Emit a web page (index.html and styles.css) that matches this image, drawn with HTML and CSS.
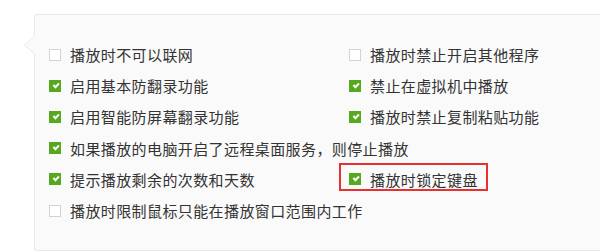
FILE: index.html
```html
<!DOCTYPE html>
<html lang="zh-CN">
    <head>
        <meta charset="utf-8">
        <title>播放设置</title>
        <meta name="viewport" content="width=device-width, initial-scale=1">
        <link rel="stylesheet" href="styles.css">
    </head>
    <body>
		<section class="panel">
			<!-- Playback restrictions -->
			<ul class="opts">
				<li class="opt"><span class="box"></span>播放时不可以联网</li>
				<li class="opt"><span class="box"></span>播放时禁止开启其他程序</li>
				<li class="opt"><span class="box on"></span>启用基本防翻录功能</li>
				<li class="opt"><span class="box on"></span>禁止在虚拟机中播放</li>
				<li class="opt"><span class="box on"></span>启用智能防屏幕翻录功能</li>
				<li class="opt"><span class="box on"></span>播放时禁止复制粘贴功能</li>
				<li class="opt wide"><span class="box on"></span>如果播放的电脑开启了远程桌面服务，则停止播放</li>
				<li class="opt"><span class="box on"></span>提示播放剩余的次数和天数</li>
				<li class="opt mark"><span class="box on"></span>播放时锁定键盘</li>
				<li class="opt wide"><span class="box"></span>播放时限制鼠标只能在播放窗口范围内工作</li>
			</ul>
		</section>
    </body>
</html>
```

FILE: styles.css
```css
/* Reset */
*,
*::after,
*::before {
	margin: 0;
	padding: 0;
	box-sizing: border-box;
}

body {
	font-family: "Noto Sans CJK SC", "Noto Sans", sans-serif;
	font-size: 15px;
	color: #333;
	background: #fff;
	width: 600px;
	height: 251px;
	overflow: hidden;
}

/* Panel with left pointer */
.panel {
	position: relative;
	margin: 14px 0 0 34px;
	width: 566px;
	height: 237px;
	background: #fafafa;
	border: 1px solid #e9e9e9;
	border-right: none;
	border-radius: 3px 0 0 3px;
	padding: 24px 0 0 14px;
}
.panel::before {
	content: "";
	position: absolute;
	left: -11px;
	top: 20px;
	border-top: 10px solid transparent;
	border-bottom: 10px solid transparent;
	border-right: 11px solid #e9e9e9;
}
.panel::after {
	content: "";
	position: absolute;
	left: -10px;
	top: 20px;
	border-top: 10px solid transparent;
	border-bottom: 10px solid transparent;
	border-right: 11px solid #fafafa;
}

.opts {
	list-style: none;
	display: grid;
	grid-template-columns: 300px 250px;
	grid-auto-rows: 31.2px;
}

.opt {
	position: relative;
	display: flex;
	align-items: center;
	line-height: 1;
	letter-spacing: 0.4px;
	white-space: nowrap;
}
.wide {
	grid-column: 1 / 3;
}

/* Checkbox */
.box {
	width: 12px;
	height: 12px;
	margin-right: 9px;
	border: 1px solid #d3d3d3;
	background: #fff;
	flex-shrink: 0;
}
.box.on {
	position: relative;
	border-color: #56a91f;
	background: #56a91f;
}
.box.on::after {
	content: "";
	position: absolute;
	left: 2.5px;
	top: 2px;
	width: 6px;
	height: 3.5px;
	border-left: 2px solid #fff;
	border-bottom: 2px solid #fff;
	transform: rotate(-45deg);
}

/* Highlight frame */
.mark::before {
	content: "";
	position: absolute;
	left: -10px;
	top: -1px;
	width: 149px;
	height: 28px;
	border: 2px solid #e8302f;
}
```
